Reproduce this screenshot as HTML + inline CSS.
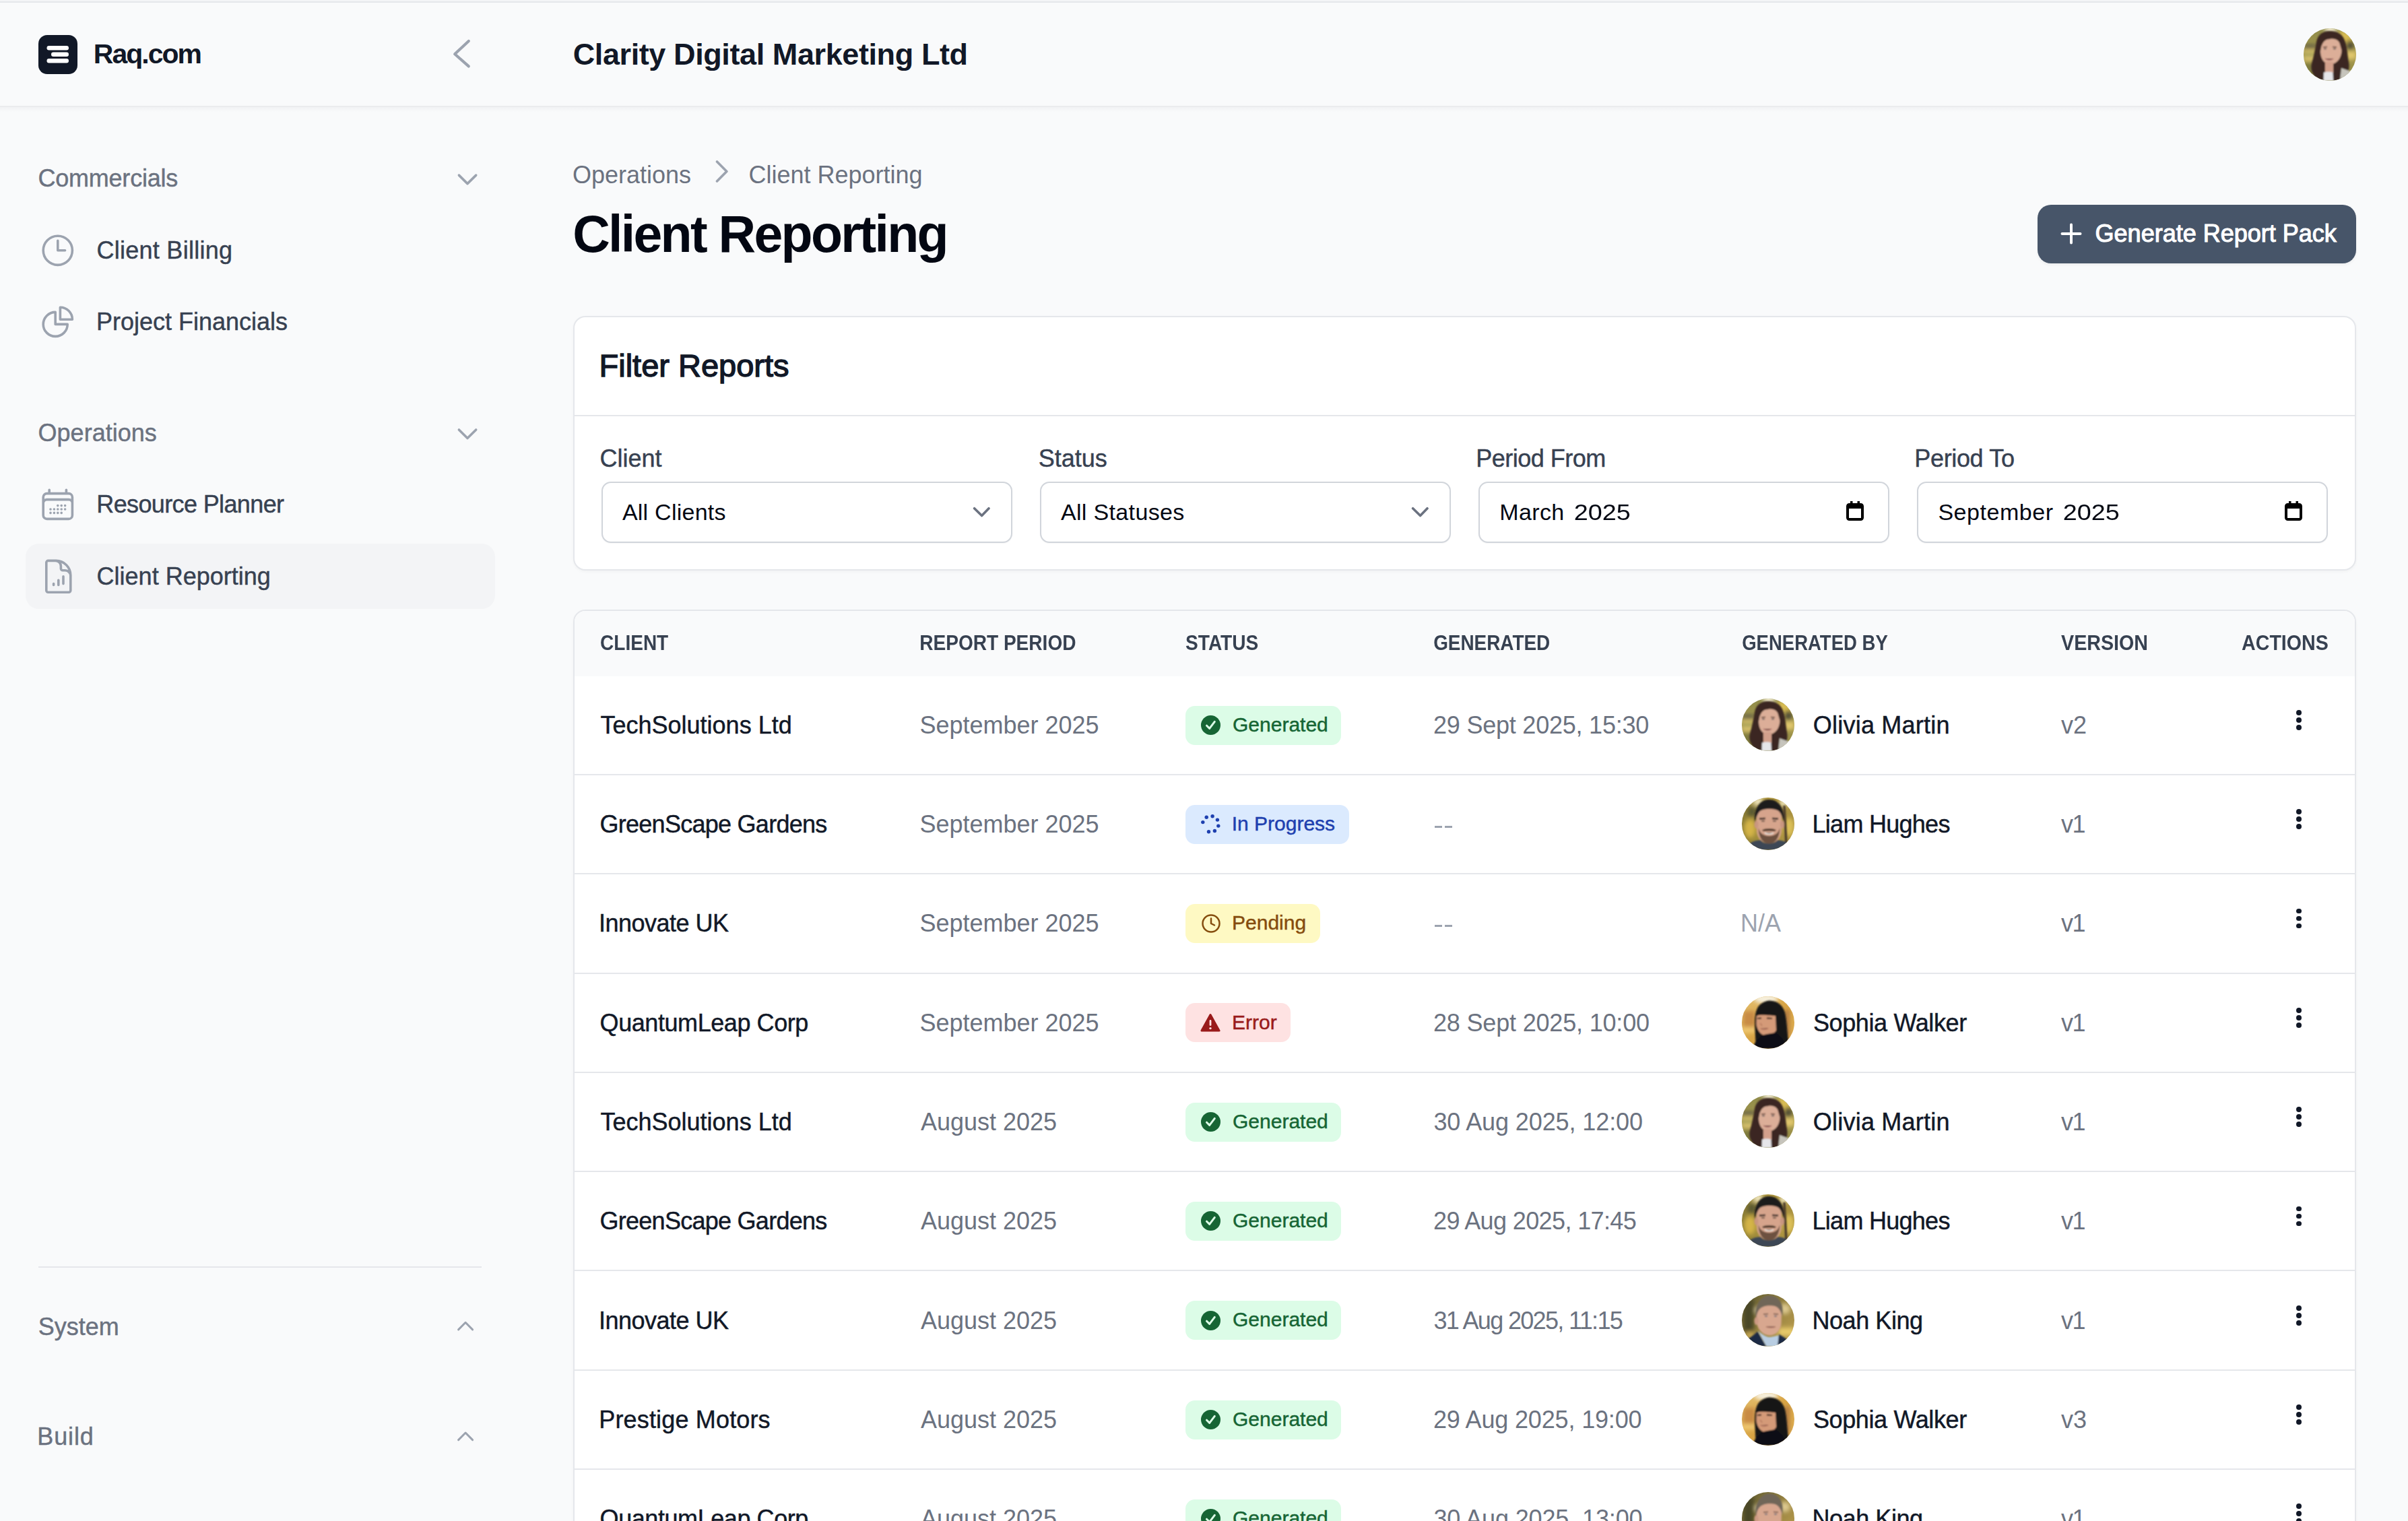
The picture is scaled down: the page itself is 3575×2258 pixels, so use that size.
<!DOCTYPE html>
<html><head><meta charset="utf-8"><title>Client Reporting</title>
<style>
html,body{margin:0;padding:0}
body{width:3575px;height:2258px;position:relative;overflow:hidden;background:#f9fafb;font-family:"Liberation Sans",sans-serif}
.a{position:absolute;display:block}
.t{position:absolute;white-space:nowrap;line-height:1}
</style></head><body>
<div class="a" style="left:0px;top:0px;width:3575px;height:2px;background:#f3f4f6;"></div>
<div class="a" style="left:0px;top:2px;width:3575px;height:2px;background:#e5e7eb;"></div>
<div class="a" style="left:0px;top:157px;width:3575px;height:2px;background:#ebecee;"></div>
<div class="a" style="left:0px;top:159px;width:3575px;height:7px;background:linear-gradient(#f1f2f4,#f9fafb);"></div>
<svg class="a" style="left:57px;top:52px;" width="58" height="58" viewBox="0 0 58 58" fill="none"><rect x="0" y="0" width="58" height="58" rx="13" fill="#111827"/><rect x="12.5" y="16" width="32.5" height="6.5" rx="3.25" fill="#fff"/><rect x="19" y="25.5" width="26" height="6.5" rx="3.25" fill="#fff"/><rect x="12.5" y="35" width="32.5" height="6.5" rx="3.25" fill="#fff"/></svg>
<div class="t" style="left:138.8px;top:59.6px;font-size:41px;font-weight:700;color:#111827;letter-spacing:-2px;">Raq.com</div>
<svg class="a" style="left:0;top:0" width="3575" height="2258" viewBox="0 0 3575 2258" fill="none"><polyline points="695.8,61.0 675.2,80.2 695.8,98.4" stroke="#9ca3af" stroke-width="4.2" stroke-linecap="round" stroke-linejoin="round" fill="none"/></svg>
<div class="t" style="left:850.7px;top:57.9px;font-size:45px;font-weight:700;color:#111827;letter-spacing:-0.4px;">Clarity Digital Marketing Ltd</div>
<svg class="a" style="left:3420.0px;top:41.5px" width="78" height="78" viewBox="0 0 78 78"><defs><clipPath id="chdr"><circle cx="39" cy="39" r="39"/></clipPath><filter id="fhdr" x="-20%" y="-20%" width="140%" height="140%"><feGaussianBlur stdDeviation="0.8"/></filter><filter id="bhdr" x="-50%" y="-50%" width="200%" height="200%"><feGaussianBlur stdDeviation="3"/></filter><linearGradient id="ghdr" x1="0" y1="0" x2="0" y2="1"><stop offset="0" stop-color="#8e8a4a"/><stop offset="0.5" stop-color="#a89a4c"/><stop offset="1" stop-color="#8a8444"/></linearGradient></defs>
<g clip-path="url(#chdr)"><rect width="78" height="78" fill="url(#ghdr)"/>
<g filter="url(#bhdr)"><ellipse cx="40" cy="2" rx="9" ry="6" fill="#f2ecd0"/><rect x="52" y="4" width="22" height="18" fill="#d8bc52"/><rect x="64" y="18" width="10" height="14" fill="#4e4c36"/>
<rect x="0" y="24" width="20" height="6" fill="#5e5a44"/><rect x="0" y="32" width="20" height="5" fill="#e0c66e"/><rect x="0" y="37" width="20" height="4" fill="#7c8a46"/><rect x="0" y="42" width="20" height="6" fill="#e6cc74"/>
<rect x="62" y="34" width="16" height="12" fill="#e2c86e"/><rect x="0" y="52" width="16" height="20" fill="#7e7a3c"/></g>
<g filter="url(#fhdr)">
<path d="M39 4 C28 4 21 10 19 20 C17 32 15 42 12 52 C10 60 12 70 24 78 L56 78 C66 70 69 60 67 50 C65 40 65 28 61 18 C58 9 50 4 39 4Z" fill="#3b2820"/>
<path d="M27 24 C28 17 33 15.5 40 15.5 C48 15.5 53 18 54 24 L56.5 33 C56 44 50 53 39 54 C30 53 25 44 25 34Z" fill="#dcae98"/>
<path d="M27 24 C26 19 31 12 40 12 L40 16 C33 16 29 19 27 26Z" fill="#3b2820"/>
<path d="M29 28 L35 27.5 M43 27.5 L49 28" stroke="#5a3a2e" stroke-width="1.4"/>
<path d="M30 30.5 L34 30.5 M44 30.5 L48 30.5" stroke="#4a4a50" stroke-width="1.5"/>
<path d="M32 45 C36 47.5 41 47.5 44 45" stroke="#b0706a" stroke-width="2"/>
<rect x="32" y="50" width="12" height="16" fill="#d3a08c"/>
<path d="M29.5 78 L30 65.5 C34 64 40 64 43.5 65.5 L44 78Z" fill="#e6e6ea"/>
<path d="M56 59 L70 64 L70 78 L54 78Z" fill="#c6c4bc"/>
</g></g></svg>
<div class="t" style="left:56.5px;top:246.9px;font-size:36px;font-weight:400;color:#6b7280;letter-spacing:-0.23px;-webkit-text-stroke:0.45px currentColor;">Commercials</div>
<svg class="a" style="left:0;top:0" width="3575" height="2258" viewBox="0 0 3575 2258" fill="none"><polyline points="681.4,260.1 694.0,272.6 706.7,260.1" stroke="#9ca3af" stroke-width="3.6" stroke-linecap="round" stroke-linejoin="round" fill="none"/></svg>
<svg class="a" style="left:57.2px;top:343.2px" width="57.6" height="57.6" viewBox="0 0 24 24" fill="none" stroke="#9ca3af" stroke-width="1.5" stroke-linecap="round" stroke-linejoin="round"><path d="M12 6v6h4.5m4.5 0a9 9 0 1 1-18 0 9 9 0 0 1 18 0Z"/></svg>
<div class="t" style="left:143.5px;top:354.0px;font-size:36px;font-weight:400;color:#374151;letter-spacing:0.26px;-webkit-text-stroke:0.45px currentColor;">Client Billing</div>
<svg class="a" style="left:57.2px;top:448.8px" width="57.6" height="57.6" viewBox="0 0 24 24" fill="none" stroke="#9ca3af" stroke-width="1.5" stroke-linecap="round" stroke-linejoin="round"><path d="M10.5 6a7.5 7.5 0 1 0 7.5 7.5h-7.5V6Z"/><path d="M13.5 10.5H21A7.5 7.5 0 0 0 13.5 3v7.5Z"/></svg>
<div class="t" style="left:143.0px;top:459.9px;font-size:36px;font-weight:400;color:#374151;-webkit-text-stroke:0.45px currentColor;">Project Financials</div>
<div class="t" style="left:56.6px;top:624.5px;font-size:36px;font-weight:400;color:#6b7280;-webkit-text-stroke:0.45px currentColor;">Operations</div>
<svg class="a" style="left:0;top:0" width="3575" height="2258" viewBox="0 0 3575 2258" fill="none"><polyline points="681.4,638.0 694.0,650.5 706.7,638.0" stroke="#9ca3af" stroke-width="3.6" stroke-linecap="round" stroke-linejoin="round" fill="none"/></svg>
<svg class="a" style="left:57.2px;top:720.4px" width="57.6" height="57.6" viewBox="0 0 24 24" fill="none" stroke="#9ca3af" stroke-width="1.5" stroke-linecap="round" stroke-linejoin="round"><path d="M6.75 3v2.25M17.25 3v2.25M3 18.75V7.5a2.25 2.25 0 0 1 2.25-2.25h13.5A2.25 2.25 0 0 1 21 7.5v11.25m-18 0A2.25 2.25 0 0 0 5.25 21h13.5A2.25 2.25 0 0 0 21 18.75m-18 0v-7.5A2.25 2.25 0 0 1 5.25 9h13.5A2.25 2.25 0 0 1 21 11.25v7.5m-9-6h.008v.008H12v-.008ZM12 15h.008v.008H12V15Zm0 2.25h.008v.008H12v-.008ZM9.75 15h.008v.008H9.75V15Zm0 2.25h.008v.008H9.75v-.008ZM7.5 15h.008v.008H7.5V15Zm0 2.25h.008v.008H7.5v-.008Zm6.75-4.5h.008v.008h-.008v-.008Zm0 2.25h.008v.008h-.008V15Zm0 2.25h.008v.008h-.008v-.008Zm2.25-4.5h.008v.008H16.5v-.008Zm0 2.25h.008v.008H16.5V15Z"/></svg>
<div class="t" style="left:143.3px;top:730.7px;font-size:36px;font-weight:400;color:#374151;letter-spacing:-0.63px;-webkit-text-stroke:0.45px currentColor;">Resource Planner</div>
<div class="a" style="left:38px;top:807px;width:697px;height:97px;background:#f3f4f6;border-radius:20px"></div>
<svg class="a" style="left:57.5px;top:827.2px" width="57.6" height="57.6" viewBox="0 0 24 24" fill="none" stroke="#9ca3af" stroke-width="1.5" stroke-linecap="round" stroke-linejoin="round"><path d="M19.5 14.25v-2.625a3.375 3.375 0 0 0-3.375-3.375h-1.5A1.125 1.125 0 0 1 13.5 7.125v-1.5a3.375 3.375 0 0 0-3.375-3.375H8.25M9 16.5v.75m3-3v3M15 12v4.5m-4.5-14.25H5.625c-.621 0-1.125.504-1.125 1.125v17.25c0 .621.504 1.125 1.125 1.125h12.75c.621 0 1.125-.504 1.125-1.125V11.25a9 9 0 0 0-9-9Z"/></svg>
<div class="t" style="left:143.6px;top:837.7px;font-size:36px;font-weight:400;color:#374151;-webkit-text-stroke:0.45px currentColor;">Client Reporting</div>
<div class="a" style="left:57px;top:1880px;width:658px;height:2px;background:#e5e7eb;"></div>
<div class="t" style="left:56.7px;top:1951.5px;font-size:36px;font-weight:400;color:#6b7280;-webkit-text-stroke:0.45px currentColor;">System</div>
<svg class="a" style="left:0;top:0" width="3575" height="2258" viewBox="0 0 3575 2258" fill="none"><polyline points="680.6,1973.9 691.1,1963.3 701.6,1973.9" stroke="#9ca3af" stroke-width="3.0" stroke-linecap="round" stroke-linejoin="round" fill="none"/></svg>
<div class="t" style="left:55.3px;top:2115.2px;font-size:36px;font-weight:400;color:#6b7280;letter-spacing:0.85px;-webkit-text-stroke:0.45px currentColor;">Build</div>
<svg class="a" style="left:0;top:0" width="3575" height="2258" viewBox="0 0 3575 2258" fill="none"><polyline points="680.6,2137.6 691.1,2127.0 701.6,2137.6" stroke="#9ca3af" stroke-width="3.0" stroke-linecap="round" stroke-linejoin="round" fill="none"/></svg>
<div class="t" style="left:849.9px;top:241.5px;font-size:36px;font-weight:400;color:#6b7280;">Operations</div>
<svg class="a" style="left:0;top:0" width="3575" height="2258" viewBox="0 0 3575 2258" fill="none"><polyline points="1064.5,240.0 1078.9,254.4 1064.5,269.0" stroke="#9ca3af" stroke-width="3.6" stroke-linecap="round" stroke-linejoin="round" fill="none"/></svg>
<div class="t" style="left:1111.4px;top:241.5px;font-size:36px;font-weight:400;color:#6b7280;">Client Reporting</div>
<div class="t" style="left:850.2px;top:308.5px;font-size:77px;font-weight:700;color:#030712;letter-spacing:-2.7px;">Client Reporting</div>
<div class="a" style="left:3025px;top:304px;width:473px;height:86.5px;background:#475569;border-radius:20px;box-shadow:0 2px 4px rgba(0,0,0,0.06)"></div>
<svg class="a" style="left:3055px;top:327px" width="40" height="40" viewBox="0 0 40 40"><path d="M20 6.5v27M6.5 20h27" stroke="#fff" stroke-width="4" stroke-linecap="round"/></svg>
<div class="t" style="left:3110.6px;top:328.9px;font-size:36px;font-weight:400;color:#ffffff;-webkit-text-stroke:1.1px #ffffff;">Generate Report Pack</div>
<div class="a" style="left:851px;top:469px;width:2643px;height:374px;background:#fff;border:2px solid #e5e7eb;border-radius:18px;box-shadow:0 2px 4px rgba(0,0,0,0.03)"></div>
<div class="a" style="left:853px;top:616px;width:2643px;height:2px;background:#e5e7eb;"></div>
<div class="t" style="left:889.5px;top:519.3px;font-size:47px;font-weight:400;color:#111827;-webkit-text-stroke:1.4px #111827;">Filter Reports</div>
<div class="t" style="left:890.5px;top:663.2px;font-size:36px;font-weight:400;color:#374151;-webkit-text-stroke:0.45px currentColor;">Client</div>
<div class="a" style="left:893px;top:715px;width:606px;height:87px;background:#fff;border:2px solid #d1d5db;border-radius:14px;box-shadow:0 1px 2px rgba(0,0,0,0.04)"></div>
<div class="t" style="left:923.9px;top:742.6px;font-size:34px;font-weight:400;color:#030712;letter-spacing:0.25px;">All Clients</div>
<svg class="a" style="left:0;top:0" width="3575" height="2258" viewBox="0 0 3575 2258" fill="none"><polyline points="1446.6,754.7 1457.6,765.5 1468.0,754.7" stroke="#6b7280" stroke-width="3.6" stroke-linecap="round" stroke-linejoin="round" fill="none"/></svg>
<div class="t" style="left:1541.7px;top:663.2px;font-size:36px;font-weight:400;color:#374151;-webkit-text-stroke:0.45px currentColor;">Status</div>
<div class="a" style="left:1544px;top:715px;width:606px;height:87px;background:#fff;border:2px solid #d1d5db;border-radius:14px;box-shadow:0 1px 2px rgba(0,0,0,0.04)"></div>
<div class="t" style="left:1574.9px;top:742.6px;font-size:34px;font-weight:400;color:#030712;letter-spacing:0.35px;">All Statuses</div>
<svg class="a" style="left:0;top:0" width="3575" height="2258" viewBox="0 0 3575 2258" fill="none"><polyline points="2097.6,754.7 2108.6,765.5 2119.0,754.7" stroke="#6b7280" stroke-width="3.6" stroke-linecap="round" stroke-linejoin="round" fill="none"/></svg>
<div class="t" style="left:2191.3px;top:663.2px;font-size:36px;font-weight:400;color:#374151;letter-spacing:-0.5px;-webkit-text-stroke:0.45px currentColor;">Period From</div>
<div class="a" style="left:2195px;top:715px;width:606px;height:87px;background:#fff;border:2px solid #d1d5db;border-radius:14px;box-shadow:0 1px 2px rgba(0,0,0,0.04)"></div>
<div class="t" style="left:2226.2px;top:742.6px;font-size:34px;font-weight:400;color:#030712;letter-spacing:0.4px;">March</div>
<div class="t" style="left:2336.7px;top:742.6px;font-size:34px;font-weight:400;color:#030712;transform:scaleX(1.11);transform-origin:1.71px 0;">2025</div>
<svg class="a" style="left:2740.5px;top:744px" width="26" height="29" viewBox="0 0 26 29"><rect x="2" y="5" width="22" height="22" rx="2.5" stroke="#000" stroke-width="4" fill="none"/><rect x="1" y="4" width="24" height="7" rx="2" fill="#000"/><rect x="6" y="0" width="3.5" height="5" fill="#000"/><rect x="16.5" y="0" width="3.5" height="5" fill="#000"/></svg>
<div class="t" style="left:2842.3px;top:663.2px;font-size:36px;font-weight:400;color:#374151;letter-spacing:-0.35px;-webkit-text-stroke:0.45px currentColor;">Period To</div>
<div class="a" style="left:2846px;top:715px;width:606px;height:87px;background:#fff;border:2px solid #d1d5db;border-radius:14px;box-shadow:0 1px 2px rgba(0,0,0,0.04)"></div>
<div class="t" style="left:2877.4px;top:742.6px;font-size:34px;font-weight:400;color:#030712;letter-spacing:0.55px;">September</div>
<div class="t" style="left:3062.9px;top:742.6px;font-size:34px;font-weight:400;color:#030712;transform:scaleX(1.11);transform-origin:1.71px 0;">2025</div>
<svg class="a" style="left:3391.5px;top:744px" width="26" height="29" viewBox="0 0 26 29"><rect x="2" y="5" width="22" height="22" rx="2.5" stroke="#000" stroke-width="4" fill="none"/><rect x="1" y="4" width="24" height="7" rx="2" fill="#000"/><rect x="6" y="0" width="3.5" height="5" fill="#000"/><rect x="16.5" y="0" width="3.5" height="5" fill="#000"/></svg>
<div class="a" style="left:851px;top:905px;width:2643px;height:1400px;background:#fff;border:2px solid #e5e7eb;border-radius:18px;box-shadow:0 2px 4px rgba(0,0,0,0.03);overflow:hidden"><div style="height:97px;background:#f9fafb"></div></div>
<div class="t" style="left:891.0px;top:939.3px;font-size:31px;font-weight:700;color:#374151;transform:scaleX(0.903);transform-origin:1.27px 0;">CLIENT</div>
<div class="t" style="left:1364.9px;top:939.3px;font-size:31px;font-weight:700;color:#374151;transform:scaleX(0.905);transform-origin:2.07px 0;">REPORT PERIOD</div>
<div class="t" style="left:1760.1px;top:939.3px;font-size:31px;font-weight:700;color:#374151;transform:scaleX(0.906);transform-origin:0.89px 0;">STATUS</div>
<div class="t" style="left:2127.7px;top:939.3px;font-size:31px;font-weight:700;color:#374151;transform:scaleX(0.9);transform-origin:1.27px 0;">GENERATED</div>
<div class="t" style="left:2585.7px;top:939.3px;font-size:31px;font-weight:700;color:#374151;transform:scaleX(0.888);transform-origin:1.27px 0;">GENERATED BY</div>
<div class="t" style="left:3059.8px;top:939.3px;font-size:31px;font-weight:700;color:#374151;transform:scaleX(0.925);transform-origin:0.21px 0;">VERSION</div>
<div class="t" style="left:3328.2px;top:939.3px;font-size:31px;font-weight:700;color:#374151;transform:scaleX(0.923);transform-origin:0.77px 0;">ACTIONS</div>
<div class="a" style="left:853px;top:1149px;width:2643px;height:2px;background:#e5e7eb;"></div>
<div class="t" style="left:891.5px;top:1058.7px;font-size:36px;font-weight:400;color:#111827;-webkit-text-stroke:0.45px currentColor;">TechSolutions Ltd</div>
<div class="t" style="left:1365.4px;top:1058.7px;font-size:36px;font-weight:400;color:#6b7280;">September 2025</div>
<div class="a" style="left:1760px;top:1047.5px;width:231px;height:58px;background:#dcfce7;border-radius:14px"></div>
<svg class="a" style="left:1783px;top:1062.0px" width="29" height="29" viewBox="0 0 29 29"><circle cx="14.5" cy="14.5" r="14.5" fill="#166534"/><path d="M8.5 15.2l4.2 4.2 7.6-10" stroke="#dcfce7" stroke-width="3" stroke-linecap="round" stroke-linejoin="round" fill="none"/></svg>
<div class="t" style="left:1830.0px;top:1060.7px;font-size:30px;font-weight:400;color:#166534;-webkit-text-stroke:0.45px currentColor;">Generated</div>
<div class="t" style="left:2128.0px;top:1058.7px;font-size:36px;font-weight:400;color:#6b7280;letter-spacing:-0.22px;">29 Sept 2025, 15:30</div>
<svg class="a" style="left:2586.0px;top:1037.0px" width="78" height="78" viewBox="0 0 78 78"><defs><clipPath id="cr0"><circle cx="39" cy="39" r="39"/></clipPath><filter id="fr0" x="-20%" y="-20%" width="140%" height="140%"><feGaussianBlur stdDeviation="0.8"/></filter><filter id="br0" x="-50%" y="-50%" width="200%" height="200%"><feGaussianBlur stdDeviation="3"/></filter><linearGradient id="gr0" x1="0" y1="0" x2="0" y2="1"><stop offset="0" stop-color="#8e8a4a"/><stop offset="0.5" stop-color="#a89a4c"/><stop offset="1" stop-color="#8a8444"/></linearGradient></defs>
<g clip-path="url(#cr0)"><rect width="78" height="78" fill="url(#gr0)"/>
<g filter="url(#br0)"><ellipse cx="40" cy="2" rx="9" ry="6" fill="#f2ecd0"/><rect x="52" y="4" width="22" height="18" fill="#d8bc52"/><rect x="64" y="18" width="10" height="14" fill="#4e4c36"/>
<rect x="0" y="24" width="20" height="6" fill="#5e5a44"/><rect x="0" y="32" width="20" height="5" fill="#e0c66e"/><rect x="0" y="37" width="20" height="4" fill="#7c8a46"/><rect x="0" y="42" width="20" height="6" fill="#e6cc74"/>
<rect x="62" y="34" width="16" height="12" fill="#e2c86e"/><rect x="0" y="52" width="16" height="20" fill="#7e7a3c"/></g>
<g filter="url(#fr0)">
<path d="M39 4 C28 4 21 10 19 20 C17 32 15 42 12 52 C10 60 12 70 24 78 L56 78 C66 70 69 60 67 50 C65 40 65 28 61 18 C58 9 50 4 39 4Z" fill="#3b2820"/>
<path d="M27 24 C28 17 33 15.5 40 15.5 C48 15.5 53 18 54 24 L56.5 33 C56 44 50 53 39 54 C30 53 25 44 25 34Z" fill="#dcae98"/>
<path d="M27 24 C26 19 31 12 40 12 L40 16 C33 16 29 19 27 26Z" fill="#3b2820"/>
<path d="M29 28 L35 27.5 M43 27.5 L49 28" stroke="#5a3a2e" stroke-width="1.4"/>
<path d="M30 30.5 L34 30.5 M44 30.5 L48 30.5" stroke="#4a4a50" stroke-width="1.5"/>
<path d="M32 45 C36 47.5 41 47.5 44 45" stroke="#b0706a" stroke-width="2"/>
<rect x="32" y="50" width="12" height="16" fill="#d3a08c"/>
<path d="M29.5 78 L30 65.5 C34 64 40 64 43.5 65.5 L44 78Z" fill="#e6e6ea"/>
<path d="M56 59 L70 64 L70 78 L54 78Z" fill="#c6c4bc"/>
</g></g></svg>
<div class="t" style="left:2691.8px;top:1058.7px;font-size:36px;font-weight:400;color:#111827;letter-spacing:0.22px;-webkit-text-stroke:0.45px currentColor;">Olivia Martin</div>
<div class="t" style="left:3059.9px;top:1058.7px;font-size:36px;font-weight:400;color:#6b7280;">v2</div>
<div class="a" style="left:3409.3px;top:1054.1px;width:7.8px;height:7.8px;border-radius:50%;background:#111827"></div>
<div class="a" style="left:3409.3px;top:1065.1px;width:7.8px;height:7.8px;border-radius:50%;background:#111827"></div>
<div class="a" style="left:3409.3px;top:1076.1px;width:7.8px;height:7.8px;border-radius:50%;background:#111827"></div>
<div class="a" style="left:853px;top:1296px;width:2643px;height:2px;background:#e5e7eb;"></div>
<div class="t" style="left:890.5px;top:1206.0px;font-size:36px;font-weight:400;color:#111827;letter-spacing:-0.73px;-webkit-text-stroke:0.45px currentColor;">GreenScape Gardens</div>
<div class="t" style="left:1365.4px;top:1206.0px;font-size:36px;font-weight:400;color:#6b7280;">September 2025</div>
<div class="a" style="left:1760px;top:1194.8px;width:243px;height:58px;background:#dbeafe;border-radius:14px"></div>
<svg class="a" style="left:1783px;top:1209.3px" width="29" height="29" viewBox="0 0 29 29"><circle cx="8.2" cy="4.2" r="2.7" fill="#1e40af"/><circle cx="17.1" cy="2.8" r="2.7" fill="#1e40af"/><circle cx="24.4" cy="8.1" r="2.7" fill="#1e40af"/><circle cx="25.8" cy="17.1" r="2.7" fill="#1e40af"/><circle cx="20.4" cy="24.5" r="2.7" fill="#1e40af"/><circle cx="11.5" cy="25.8" r="2.7" fill="#1e40af"/><circle cx="2.8" cy="11.6" r="2.7" fill="#1e40af"/></svg>
<div class="t" style="left:1828.7px;top:1208.0px;font-size:30px;font-weight:400;color:#1e40af;-webkit-text-stroke:0.45px currentColor;">In Progress</div>
<div class="a" style="left:2130px;top:1226px;width:11px;height:2.5px;background:#9ca3af;"></div>
<div class="a" style="left:2145px;top:1226px;width:11px;height:2.5px;background:#9ca3af;"></div>
<svg class="a" style="left:2586.0px;top:1184.3px" width="78" height="78" viewBox="0 0 78 78"><defs><clipPath id="cr1"><circle cx="39" cy="39" r="39"/></clipPath><filter id="fr1" x="-20%" y="-20%" width="140%" height="140%"><feGaussianBlur stdDeviation="0.8"/></filter><filter id="br1" x="-50%" y="-50%" width="200%" height="200%"><feGaussianBlur stdDeviation="3"/></filter><linearGradient id="gr1" x1="0" y1="0" x2="1" y2="0"><stop offset="0" stop-color="#8a7c34"/><stop offset="0.5" stop-color="#b09840"/><stop offset="1" stop-color="#a89040"/></linearGradient></defs>
<g clip-path="url(#cr1)"><rect width="78" height="78" fill="url(#gr1)"/>
<g filter="url(#br1)"><ellipse cx="24" cy="6" rx="8" ry="6" fill="#efe6c0"/><ellipse cx="62" cy="8" rx="6" ry="6" fill="#efe6c0"/><rect x="8" y="14" width="14" height="14" fill="#5c5a30"/>
<ellipse cx="12" cy="46" rx="9" ry="14" fill="#d4b446"/><ellipse cx="70" cy="44" rx="8" ry="14" fill="#dcc058"/></g>
<g filter="url(#fr1)">
<path d="M63 12 L66 70" stroke="#4a3a2a" stroke-width="3.5"/>
<path d="M22 30 C22 20 30 14.5 40.5 14.5 C51 14.5 59 20 59 30 L59 48 C59 60 51 68 40.5 68 C30 68 22 60 22 48Z" fill="#d6a48c"/>
<ellipse cx="21.5" cy="40" rx="3" ry="6" fill="#c99680"/><ellipse cx="60" cy="40" rx="3" ry="6" fill="#c99680"/>
<path d="M19.5 37 C17 18 26 3 40 3 C55 3 64 16 62 36 C60 28 58 22 53 19 C45 16 34 16 27 20 C23 24 21 30 19.5 37Z" fill="#1c1a1c"/>
<path d="M26 31.5 L35 31 M45 31 L54 31.5" stroke="#231c1c" stroke-width="2.4"/>
<path d="M29 35 L34 35 M46 35 L51 35" stroke="#4a3a34" stroke-width="1.5"/>
<path d="M24.5 45 C25 62 33 68.5 40.5 68.5 C48 68.5 56 62 56.5 45 C54 53 50 56.5 40.5 57 C31 56.5 27 53 24.5 45Z" fill="#5f4636" opacity="0.88"/><path d="M31 49 C35 46.5 46 46.5 50 49 C46 48.5 35 48.5 31 49Z" stroke="#4a3428" stroke-width="2.2"/>
<path d="M34 52.5 C37 54.5 44 54.5 47 52.5" stroke="#f0ece6" stroke-width="1.6"/>
<path d="M4 78 C8 68 16 64 28 63 C32 70 48 70 53 63 C64 64 72 68 76 78Z" fill="#3e4654"/>
</g></g></svg>
<div class="t" style="left:2690.5px;top:1206.0px;font-size:36px;font-weight:400;color:#111827;letter-spacing:-0.72px;-webkit-text-stroke:0.45px currentColor;">Liam Hughes</div>
<div class="t" style="left:3059.9px;top:1206.0px;font-size:36px;font-weight:400;color:#6b7280;letter-spacing:-1.5px;">v1</div>
<div class="a" style="left:3409.3px;top:1201.4px;width:7.8px;height:7.8px;border-radius:50%;background:#111827"></div>
<div class="a" style="left:3409.3px;top:1212.4px;width:7.8px;height:7.8px;border-radius:50%;background:#111827"></div>
<div class="a" style="left:3409.3px;top:1223.4px;width:7.8px;height:7.8px;border-radius:50%;background:#111827"></div>
<div class="a" style="left:853px;top:1444px;width:2643px;height:2px;background:#e5e7eb;"></div>
<div class="t" style="left:889.0px;top:1353.3px;font-size:36px;font-weight:400;color:#111827;letter-spacing:-0.5px;-webkit-text-stroke:0.45px currentColor;">Innovate UK</div>
<div class="t" style="left:1365.4px;top:1353.3px;font-size:36px;font-weight:400;color:#6b7280;">September 2025</div>
<div class="a" style="left:1760px;top:1342.1px;width:200px;height:58px;background:#fef9c3;border-radius:14px"></div>
<svg class="a" style="left:1782.5px;top:1356.1px" width="30" height="30" viewBox="0 0 24 24" fill="none" stroke="#854d0e" stroke-width="2" stroke-linecap="round" stroke-linejoin="round"><circle cx="12" cy="12" r="10"/><polyline points="12 6 12 12 16 14"/></svg>
<div class="t" style="left:1829.0px;top:1355.3px;font-size:30px;font-weight:400;color:#854d0e;-webkit-text-stroke:0.45px currentColor;">Pending</div>
<div class="a" style="left:2130px;top:1373px;width:11px;height:2.5px;background:#9ca3af;"></div>
<div class="a" style="left:2145px;top:1373px;width:11px;height:2.5px;background:#9ca3af;"></div>
<div class="t" style="left:2584.0px;top:1353.3px;font-size:36px;font-weight:400;color:#9ca3af;">N/A</div>
<div class="t" style="left:3059.9px;top:1353.3px;font-size:36px;font-weight:400;color:#6b7280;letter-spacing:-1.5px;">v1</div>
<div class="a" style="left:3409.3px;top:1348.7px;width:7.8px;height:7.8px;border-radius:50%;background:#111827"></div>
<div class="a" style="left:3409.3px;top:1359.7px;width:7.8px;height:7.8px;border-radius:50%;background:#111827"></div>
<div class="a" style="left:3409.3px;top:1370.7px;width:7.8px;height:7.8px;border-radius:50%;background:#111827"></div>
<div class="a" style="left:853px;top:1591px;width:2643px;height:2px;background:#e5e7eb;"></div>
<div class="t" style="left:890.6px;top:1500.6px;font-size:36px;font-weight:400;color:#111827;letter-spacing:-0.43px;-webkit-text-stroke:0.45px currentColor;">QuantumLeap Corp</div>
<div class="t" style="left:1365.4px;top:1500.6px;font-size:36px;font-weight:400;color:#6b7280;">September 2025</div>
<div class="a" style="left:1760px;top:1489.4px;width:156px;height:58px;background:#fee2e2;border-radius:14px"></div>
<svg class="a" style="left:1782.3px;top:1503.6px" width="30" height="29" viewBox="0 0 30 29"><polygon points="15,2.5 28,26 2,26" fill="#991b1b" stroke="#991b1b" stroke-width="3" stroke-linejoin="round"/><rect x="13.6" y="10" width="2.8" height="9" rx="1.4" fill="#fee2e2"/><circle cx="15" cy="22.6" r="1.7" fill="#fee2e2"/></svg>
<div class="t" style="left:1829.0px;top:1502.6px;font-size:30px;font-weight:400;color:#991b1b;-webkit-text-stroke:0.45px currentColor;">Error</div>
<div class="t" style="left:2128.0px;top:1500.6px;font-size:36px;font-weight:400;color:#6b7280;letter-spacing:-0.18px;">28 Sept 2025, 10:00</div>
<svg class="a" style="left:2586.0px;top:1478.9px" width="78" height="78" viewBox="0 0 78 78"><defs><clipPath id="cr3"><circle cx="39" cy="39" r="39"/></clipPath><filter id="fr3" x="-20%" y="-20%" width="140%" height="140%"><feGaussianBlur stdDeviation="0.8"/></filter><filter id="br3" x="-50%" y="-50%" width="200%" height="200%"><feGaussianBlur stdDeviation="3"/></filter><linearGradient id="gr3" x1="0" y1="0" x2="1" y2="1"><stop offset="0" stop-color="#e4c070"/><stop offset="0.5" stop-color="#d8a444"/><stop offset="1" stop-color="#deae52"/></linearGradient></defs>
<g clip-path="url(#cr3)"><rect width="78" height="78" fill="url(#gr3)"/>
<g filter="url(#br3)"><ellipse cx="36" cy="4" rx="18" ry="7" fill="#f6f0de"/><rect x="2" y="22" width="18" height="24" fill="#c88a44"/><rect x="0" y="46" width="22" height="8" fill="#f2ca72"/>
<rect x="64" y="20" width="6" height="40" fill="#a87040"/></g>
<g filter="url(#fr3)">
<path d="M21 78 L19.5 50 C19 36 19 24 24 16 C29 9 36 6.5 42 6.5 C52 7 60 12 64 24 C67 36 67 52 69 64 C68 72 64 76 60 78Z" fill="#141416"/>
<path d="M22 30 C22 28 28 27.5 36 28 C44 28.5 50 28.5 52 30 L53.5 42 C53 52 46 58.5 36 58.5 C28 58 22 50 21.5 40Z" fill="#d49a78"/>
<path d="M50 28 L56 30 L57 56 L51 50Z" fill="#141416"/>
<path d="M23 33 L29 32.5 M37 32.5 L45 33" stroke="#2a1a14" stroke-width="1.8"/>
<path d="M27 40 C29 42 30 42 30 44" stroke="#b87a5e" stroke-width="1.2"/>
<path d="M28 48 C31 49 36 49 39 47.5" stroke="#a86a58" stroke-width="1.8"/>
<path d="M16 78 C20 64 28 57 38 56 L50 54 C58 58 64 66 66 78Z" fill="#111114"/>
</g></g></svg>
<div class="t" style="left:2691.9px;top:1500.6px;font-size:36px;font-weight:400;color:#111827;letter-spacing:-0.37px;-webkit-text-stroke:0.45px currentColor;">Sophia Walker</div>
<div class="t" style="left:3059.9px;top:1500.6px;font-size:36px;font-weight:400;color:#6b7280;letter-spacing:-1.5px;">v1</div>
<div class="a" style="left:3409.3px;top:1496.0px;width:7.8px;height:7.8px;border-radius:50%;background:#111827"></div>
<div class="a" style="left:3409.3px;top:1507.0px;width:7.8px;height:7.8px;border-radius:50%;background:#111827"></div>
<div class="a" style="left:3409.3px;top:1518.0px;width:7.8px;height:7.8px;border-radius:50%;background:#111827"></div>
<div class="a" style="left:853px;top:1738px;width:2643px;height:2px;background:#e5e7eb;"></div>
<div class="t" style="left:891.5px;top:1647.9px;font-size:36px;font-weight:400;color:#111827;-webkit-text-stroke:0.45px currentColor;">TechSolutions Ltd</div>
<div class="t" style="left:1366.9px;top:1647.9px;font-size:36px;font-weight:400;color:#6b7280;">August 2025</div>
<div class="a" style="left:1760px;top:1636.7px;width:231px;height:58px;background:#dcfce7;border-radius:14px"></div>
<svg class="a" style="left:1783px;top:1651.2px" width="29" height="29" viewBox="0 0 29 29"><circle cx="14.5" cy="14.5" r="14.5" fill="#166534"/><path d="M8.5 15.2l4.2 4.2 7.6-10" stroke="#dcfce7" stroke-width="3" stroke-linecap="round" stroke-linejoin="round" fill="none"/></svg>
<div class="t" style="left:1830.0px;top:1649.9px;font-size:30px;font-weight:400;color:#166534;-webkit-text-stroke:0.45px currentColor;">Generated</div>
<div class="t" style="left:2128.4px;top:1647.9px;font-size:36px;font-weight:400;color:#6b7280;letter-spacing:-0.1px;">30 Aug 2025, 12:00</div>
<svg class="a" style="left:2586.0px;top:1626.2px" width="78" height="78" viewBox="0 0 78 78"><defs><clipPath id="cr4"><circle cx="39" cy="39" r="39"/></clipPath><filter id="fr4" x="-20%" y="-20%" width="140%" height="140%"><feGaussianBlur stdDeviation="0.8"/></filter><filter id="br4" x="-50%" y="-50%" width="200%" height="200%"><feGaussianBlur stdDeviation="3"/></filter><linearGradient id="gr4" x1="0" y1="0" x2="0" y2="1"><stop offset="0" stop-color="#8e8a4a"/><stop offset="0.5" stop-color="#a89a4c"/><stop offset="1" stop-color="#8a8444"/></linearGradient></defs>
<g clip-path="url(#cr4)"><rect width="78" height="78" fill="url(#gr4)"/>
<g filter="url(#br4)"><ellipse cx="40" cy="2" rx="9" ry="6" fill="#f2ecd0"/><rect x="52" y="4" width="22" height="18" fill="#d8bc52"/><rect x="64" y="18" width="10" height="14" fill="#4e4c36"/>
<rect x="0" y="24" width="20" height="6" fill="#5e5a44"/><rect x="0" y="32" width="20" height="5" fill="#e0c66e"/><rect x="0" y="37" width="20" height="4" fill="#7c8a46"/><rect x="0" y="42" width="20" height="6" fill="#e6cc74"/>
<rect x="62" y="34" width="16" height="12" fill="#e2c86e"/><rect x="0" y="52" width="16" height="20" fill="#7e7a3c"/></g>
<g filter="url(#fr4)">
<path d="M39 4 C28 4 21 10 19 20 C17 32 15 42 12 52 C10 60 12 70 24 78 L56 78 C66 70 69 60 67 50 C65 40 65 28 61 18 C58 9 50 4 39 4Z" fill="#3b2820"/>
<path d="M27 24 C28 17 33 15.5 40 15.5 C48 15.5 53 18 54 24 L56.5 33 C56 44 50 53 39 54 C30 53 25 44 25 34Z" fill="#dcae98"/>
<path d="M27 24 C26 19 31 12 40 12 L40 16 C33 16 29 19 27 26Z" fill="#3b2820"/>
<path d="M29 28 L35 27.5 M43 27.5 L49 28" stroke="#5a3a2e" stroke-width="1.4"/>
<path d="M30 30.5 L34 30.5 M44 30.5 L48 30.5" stroke="#4a4a50" stroke-width="1.5"/>
<path d="M32 45 C36 47.5 41 47.5 44 45" stroke="#b0706a" stroke-width="2"/>
<rect x="32" y="50" width="12" height="16" fill="#d3a08c"/>
<path d="M29.5 78 L30 65.5 C34 64 40 64 43.5 65.5 L44 78Z" fill="#e6e6ea"/>
<path d="M56 59 L70 64 L70 78 L54 78Z" fill="#c6c4bc"/>
</g></g></svg>
<div class="t" style="left:2691.8px;top:1647.9px;font-size:36px;font-weight:400;color:#111827;letter-spacing:0.22px;-webkit-text-stroke:0.45px currentColor;">Olivia Martin</div>
<div class="t" style="left:3059.9px;top:1647.9px;font-size:36px;font-weight:400;color:#6b7280;letter-spacing:-1.5px;">v1</div>
<div class="a" style="left:3409.3px;top:1643.3px;width:7.8px;height:7.8px;border-radius:50%;background:#111827"></div>
<div class="a" style="left:3409.3px;top:1654.3px;width:7.8px;height:7.8px;border-radius:50%;background:#111827"></div>
<div class="a" style="left:3409.3px;top:1665.3px;width:7.8px;height:7.8px;border-radius:50%;background:#111827"></div>
<div class="a" style="left:853px;top:1885px;width:2643px;height:2px;background:#e5e7eb;"></div>
<div class="t" style="left:890.5px;top:1795.2px;font-size:36px;font-weight:400;color:#111827;letter-spacing:-0.73px;-webkit-text-stroke:0.45px currentColor;">GreenScape Gardens</div>
<div class="t" style="left:1366.9px;top:1795.2px;font-size:36px;font-weight:400;color:#6b7280;">August 2025</div>
<div class="a" style="left:1760px;top:1783.9px;width:231px;height:58px;background:#dcfce7;border-radius:14px"></div>
<svg class="a" style="left:1783px;top:1798.4px" width="29" height="29" viewBox="0 0 29 29"><circle cx="14.5" cy="14.5" r="14.5" fill="#166534"/><path d="M8.5 15.2l4.2 4.2 7.6-10" stroke="#dcfce7" stroke-width="3" stroke-linecap="round" stroke-linejoin="round" fill="none"/></svg>
<div class="t" style="left:1830.0px;top:1797.1px;font-size:30px;font-weight:400;color:#166534;-webkit-text-stroke:0.45px currentColor;">Generated</div>
<div class="t" style="left:2128.0px;top:1795.2px;font-size:36px;font-weight:400;color:#6b7280;letter-spacing:-0.62px;">29 Aug 2025, 17:45</div>
<svg class="a" style="left:2586.0px;top:1773.4px" width="78" height="78" viewBox="0 0 78 78"><defs><clipPath id="cr5"><circle cx="39" cy="39" r="39"/></clipPath><filter id="fr5" x="-20%" y="-20%" width="140%" height="140%"><feGaussianBlur stdDeviation="0.8"/></filter><filter id="br5" x="-50%" y="-50%" width="200%" height="200%"><feGaussianBlur stdDeviation="3"/></filter><linearGradient id="gr5" x1="0" y1="0" x2="1" y2="0"><stop offset="0" stop-color="#8a7c34"/><stop offset="0.5" stop-color="#b09840"/><stop offset="1" stop-color="#a89040"/></linearGradient></defs>
<g clip-path="url(#cr5)"><rect width="78" height="78" fill="url(#gr5)"/>
<g filter="url(#br5)"><ellipse cx="24" cy="6" rx="8" ry="6" fill="#efe6c0"/><ellipse cx="62" cy="8" rx="6" ry="6" fill="#efe6c0"/><rect x="8" y="14" width="14" height="14" fill="#5c5a30"/>
<ellipse cx="12" cy="46" rx="9" ry="14" fill="#d4b446"/><ellipse cx="70" cy="44" rx="8" ry="14" fill="#dcc058"/></g>
<g filter="url(#fr5)">
<path d="M63 12 L66 70" stroke="#4a3a2a" stroke-width="3.5"/>
<path d="M22 30 C22 20 30 14.5 40.5 14.5 C51 14.5 59 20 59 30 L59 48 C59 60 51 68 40.5 68 C30 68 22 60 22 48Z" fill="#d6a48c"/>
<ellipse cx="21.5" cy="40" rx="3" ry="6" fill="#c99680"/><ellipse cx="60" cy="40" rx="3" ry="6" fill="#c99680"/>
<path d="M19.5 37 C17 18 26 3 40 3 C55 3 64 16 62 36 C60 28 58 22 53 19 C45 16 34 16 27 20 C23 24 21 30 19.5 37Z" fill="#1c1a1c"/>
<path d="M26 31.5 L35 31 M45 31 L54 31.5" stroke="#231c1c" stroke-width="2.4"/>
<path d="M29 35 L34 35 M46 35 L51 35" stroke="#4a3a34" stroke-width="1.5"/>
<path d="M24.5 45 C25 62 33 68.5 40.5 68.5 C48 68.5 56 62 56.5 45 C54 53 50 56.5 40.5 57 C31 56.5 27 53 24.5 45Z" fill="#5f4636" opacity="0.88"/><path d="M31 49 C35 46.5 46 46.5 50 49 C46 48.5 35 48.5 31 49Z" stroke="#4a3428" stroke-width="2.2"/>
<path d="M34 52.5 C37 54.5 44 54.5 47 52.5" stroke="#f0ece6" stroke-width="1.6"/>
<path d="M4 78 C8 68 16 64 28 63 C32 70 48 70 53 63 C64 64 72 68 76 78Z" fill="#3e4654"/>
</g></g></svg>
<div class="t" style="left:2690.5px;top:1795.2px;font-size:36px;font-weight:400;color:#111827;letter-spacing:-0.72px;-webkit-text-stroke:0.45px currentColor;">Liam Hughes</div>
<div class="t" style="left:3059.9px;top:1795.2px;font-size:36px;font-weight:400;color:#6b7280;letter-spacing:-1.5px;">v1</div>
<div class="a" style="left:3409.3px;top:1790.5px;width:7.8px;height:7.8px;border-radius:50%;background:#111827"></div>
<div class="a" style="left:3409.3px;top:1801.5px;width:7.8px;height:7.8px;border-radius:50%;background:#111827"></div>
<div class="a" style="left:3409.3px;top:1812.5px;width:7.8px;height:7.8px;border-radius:50%;background:#111827"></div>
<div class="a" style="left:853px;top:2033px;width:2643px;height:2px;background:#e5e7eb;"></div>
<div class="t" style="left:889.0px;top:1942.5px;font-size:36px;font-weight:400;color:#111827;letter-spacing:-0.5px;-webkit-text-stroke:0.45px currentColor;">Innovate UK</div>
<div class="t" style="left:1366.9px;top:1942.5px;font-size:36px;font-weight:400;color:#6b7280;">August 2025</div>
<div class="a" style="left:1760px;top:1931.2px;width:231px;height:58px;background:#dcfce7;border-radius:14px"></div>
<svg class="a" style="left:1783px;top:1945.7px" width="29" height="29" viewBox="0 0 29 29"><circle cx="14.5" cy="14.5" r="14.5" fill="#166534"/><path d="M8.5 15.2l4.2 4.2 7.6-10" stroke="#dcfce7" stroke-width="3" stroke-linecap="round" stroke-linejoin="round" fill="none"/></svg>
<div class="t" style="left:1830.0px;top:1944.4px;font-size:30px;font-weight:400;color:#166534;-webkit-text-stroke:0.45px currentColor;">Generated</div>
<div class="t" style="left:2128.4px;top:1942.5px;font-size:36px;font-weight:400;color:#6b7280;letter-spacing:-1.66px;">31 Aug 2025, 11:15</div>
<svg class="a" style="left:2586.0px;top:1920.7px" width="78" height="78" viewBox="0 0 78 78"><defs><clipPath id="cr6"><circle cx="39" cy="39" r="39"/></clipPath><filter id="fr6" x="-20%" y="-20%" width="140%" height="140%"><feGaussianBlur stdDeviation="0.8"/></filter><filter id="br6" x="-50%" y="-50%" width="200%" height="200%"><feGaussianBlur stdDeviation="3"/></filter><linearGradient id="gr6" x1="0" y1="0" x2="1" y2="1"><stop offset="0" stop-color="#5e5a30"/><stop offset="0.5" stop-color="#968240"/><stop offset="1" stop-color="#c4a452"/></linearGradient></defs>
<g clip-path="url(#cr6)"><rect width="78" height="78" fill="url(#gr6)"/>
<g filter="url(#br6)"><rect x="2" y="8" width="16" height="50" fill="#4a4628"/><ellipse cx="24" cy="24" rx="4" ry="4" fill="#ece2b8"/><ellipse cx="64" cy="22" rx="8" ry="8" fill="#dcc88e"/>
<rect x="54" y="50" width="24" height="12" fill="#e8ca6a"/><rect x="6" y="56" width="12" height="10" fill="#c8a852"/></g>
<g filter="url(#fr6)">
<path d="M21 30 C21 19 29 13 40 13 C52 13 59 19 59 31 L58.5 45 C57 55 50 61.5 41 61.5 C32 61 24 54 22.5 44Z" fill="#d8a78f"/>
<ellipse cx="21.5" cy="40" rx="3" ry="6" fill="#cc9a84"/>
<path d="M21 36 C18 18 28 2.5 40 2.5 C54 2.5 63 12 60 34 C58 24 54 18.5 46 17.5 C37 16.5 28 18 24 26 C22.5 29 22 32 21 36Z" fill="#6f6659"/>
<path d="M32 30 L39 29.5 M47 29.5 L54 30" stroke="#6a5046" stroke-width="1.6"/>
<path d="M34 33 L38 33 M48 33 L52 33" stroke="#5a6478" stroke-width="1.5"/>
<path d="M36 48.5 C40 50 46 50 50 48.5" stroke="#a87060" stroke-width="1.6"/>
<path d="M24 54.5 L36.5 78 L53 78 L56 61.5 C50 62 44 64 40 64 C32 62 28 58 24 54.5Z" fill="#b8cde2"/>
<path d="M0 78 L0 72 C6 68 12 66.4 23.4 55.7 L36.5 78Z M55 59.8 L62 64 C68 68 74 72 78 78 L53 78Z" fill="#1f2a44"/>
</g></g></svg>
<div class="t" style="left:2690.5px;top:1942.5px;font-size:36px;font-weight:400;color:#111827;letter-spacing:-0.45px;-webkit-text-stroke:0.45px currentColor;">Noah King</div>
<div class="t" style="left:3059.9px;top:1942.5px;font-size:36px;font-weight:400;color:#6b7280;letter-spacing:-1.5px;">v1</div>
<div class="a" style="left:3409.3px;top:1937.8px;width:7.8px;height:7.8px;border-radius:50%;background:#111827"></div>
<div class="a" style="left:3409.3px;top:1948.8px;width:7.8px;height:7.8px;border-radius:50%;background:#111827"></div>
<div class="a" style="left:3409.3px;top:1959.8px;width:7.8px;height:7.8px;border-radius:50%;background:#111827"></div>
<div class="a" style="left:853px;top:2180px;width:2643px;height:2px;background:#e5e7eb;"></div>
<div class="t" style="left:889.3px;top:2089.7px;font-size:36px;font-weight:400;color:#111827;letter-spacing:0.16px;-webkit-text-stroke:0.45px currentColor;">Prestige Motors</div>
<div class="t" style="left:1366.9px;top:2089.7px;font-size:36px;font-weight:400;color:#6b7280;">August 2025</div>
<div class="a" style="left:1760px;top:2078.5px;width:231px;height:58px;background:#dcfce7;border-radius:14px"></div>
<svg class="a" style="left:1783px;top:2093.0px" width="29" height="29" viewBox="0 0 29 29"><circle cx="14.5" cy="14.5" r="14.5" fill="#166534"/><path d="M8.5 15.2l4.2 4.2 7.6-10" stroke="#dcfce7" stroke-width="3" stroke-linecap="round" stroke-linejoin="round" fill="none"/></svg>
<div class="t" style="left:1830.0px;top:2091.7px;font-size:30px;font-weight:400;color:#166534;-webkit-text-stroke:0.45px currentColor;">Generated</div>
<div class="t" style="left:2128.0px;top:2089.7px;font-size:36px;font-weight:400;color:#6b7280;letter-spacing:-0.16px;">29 Aug 2025, 19:00</div>
<svg class="a" style="left:2586.0px;top:2068.0px" width="78" height="78" viewBox="0 0 78 78"><defs><clipPath id="cr7"><circle cx="39" cy="39" r="39"/></clipPath><filter id="fr7" x="-20%" y="-20%" width="140%" height="140%"><feGaussianBlur stdDeviation="0.8"/></filter><filter id="br7" x="-50%" y="-50%" width="200%" height="200%"><feGaussianBlur stdDeviation="3"/></filter><linearGradient id="gr7" x1="0" y1="0" x2="1" y2="1"><stop offset="0" stop-color="#e4c070"/><stop offset="0.5" stop-color="#d8a444"/><stop offset="1" stop-color="#deae52"/></linearGradient></defs>
<g clip-path="url(#cr7)"><rect width="78" height="78" fill="url(#gr7)"/>
<g filter="url(#br7)"><ellipse cx="36" cy="4" rx="18" ry="7" fill="#f6f0de"/><rect x="2" y="22" width="18" height="24" fill="#c88a44"/><rect x="0" y="46" width="22" height="8" fill="#f2ca72"/>
<rect x="64" y="20" width="6" height="40" fill="#a87040"/></g>
<g filter="url(#fr7)">
<path d="M21 78 L19.5 50 C19 36 19 24 24 16 C29 9 36 6.5 42 6.5 C52 7 60 12 64 24 C67 36 67 52 69 64 C68 72 64 76 60 78Z" fill="#141416"/>
<path d="M22 30 C22 28 28 27.5 36 28 C44 28.5 50 28.5 52 30 L53.5 42 C53 52 46 58.5 36 58.5 C28 58 22 50 21.5 40Z" fill="#d49a78"/>
<path d="M50 28 L56 30 L57 56 L51 50Z" fill="#141416"/>
<path d="M23 33 L29 32.5 M37 32.5 L45 33" stroke="#2a1a14" stroke-width="1.8"/>
<path d="M27 40 C29 42 30 42 30 44" stroke="#b87a5e" stroke-width="1.2"/>
<path d="M28 48 C31 49 36 49 39 47.5" stroke="#a86a58" stroke-width="1.8"/>
<path d="M16 78 C20 64 28 57 38 56 L50 54 C58 58 64 66 66 78Z" fill="#111114"/>
</g></g></svg>
<div class="t" style="left:2691.9px;top:2089.7px;font-size:36px;font-weight:400;color:#111827;letter-spacing:-0.37px;-webkit-text-stroke:0.45px currentColor;">Sophia Walker</div>
<div class="t" style="left:3059.9px;top:2089.7px;font-size:36px;font-weight:400;color:#6b7280;">v3</div>
<div class="a" style="left:3409.3px;top:2085.1px;width:7.8px;height:7.8px;border-radius:50%;background:#111827"></div>
<div class="a" style="left:3409.3px;top:2096.1px;width:7.8px;height:7.8px;border-radius:50%;background:#111827"></div>
<div class="a" style="left:3409.3px;top:2107.1px;width:7.8px;height:7.8px;border-radius:50%;background:#111827"></div>
<div class="t" style="left:890.6px;top:2237.0px;font-size:36px;font-weight:400;color:#111827;letter-spacing:-0.43px;-webkit-text-stroke:0.45px currentColor;">QuantumLeap Corp</div>
<div class="t" style="left:1366.9px;top:2237.0px;font-size:36px;font-weight:400;color:#6b7280;">August 2025</div>
<div class="a" style="left:1760px;top:2225.8px;width:231px;height:58px;background:#dcfce7;border-radius:14px"></div>
<svg class="a" style="left:1783px;top:2240.3px" width="29" height="29" viewBox="0 0 29 29"><circle cx="14.5" cy="14.5" r="14.5" fill="#166534"/><path d="M8.5 15.2l4.2 4.2 7.6-10" stroke="#dcfce7" stroke-width="3" stroke-linecap="round" stroke-linejoin="round" fill="none"/></svg>
<div class="t" style="left:1830.0px;top:2239.0px;font-size:30px;font-weight:400;color:#166534;-webkit-text-stroke:0.45px currentColor;">Generated</div>
<div class="t" style="left:2128.4px;top:2237.0px;font-size:36px;font-weight:400;color:#6b7280;letter-spacing:-0.12px;">30 Aug 2025, 13:00</div>
<svg class="a" style="left:2586.0px;top:2215.3px" width="78" height="78" viewBox="0 0 78 78"><defs><clipPath id="cr8"><circle cx="39" cy="39" r="39"/></clipPath><filter id="fr8" x="-20%" y="-20%" width="140%" height="140%"><feGaussianBlur stdDeviation="0.8"/></filter><filter id="br8" x="-50%" y="-50%" width="200%" height="200%"><feGaussianBlur stdDeviation="3"/></filter><linearGradient id="gr8" x1="0" y1="0" x2="1" y2="1"><stop offset="0" stop-color="#5e5a30"/><stop offset="0.5" stop-color="#968240"/><stop offset="1" stop-color="#c4a452"/></linearGradient></defs>
<g clip-path="url(#cr8)"><rect width="78" height="78" fill="url(#gr8)"/>
<g filter="url(#br8)"><rect x="2" y="8" width="16" height="50" fill="#4a4628"/><ellipse cx="24" cy="24" rx="4" ry="4" fill="#ece2b8"/><ellipse cx="64" cy="22" rx="8" ry="8" fill="#dcc88e"/>
<rect x="54" y="50" width="24" height="12" fill="#e8ca6a"/><rect x="6" y="56" width="12" height="10" fill="#c8a852"/></g>
<g filter="url(#fr8)">
<path d="M21 30 C21 19 29 13 40 13 C52 13 59 19 59 31 L58.5 45 C57 55 50 61.5 41 61.5 C32 61 24 54 22.5 44Z" fill="#d8a78f"/>
<ellipse cx="21.5" cy="40" rx="3" ry="6" fill="#cc9a84"/>
<path d="M21 36 C18 18 28 2.5 40 2.5 C54 2.5 63 12 60 34 C58 24 54 18.5 46 17.5 C37 16.5 28 18 24 26 C22.5 29 22 32 21 36Z" fill="#6f6659"/>
<path d="M32 30 L39 29.5 M47 29.5 L54 30" stroke="#6a5046" stroke-width="1.6"/>
<path d="M34 33 L38 33 M48 33 L52 33" stroke="#5a6478" stroke-width="1.5"/>
<path d="M36 48.5 C40 50 46 50 50 48.5" stroke="#a87060" stroke-width="1.6"/>
<path d="M24 54.5 L36.5 78 L53 78 L56 61.5 C50 62 44 64 40 64 C32 62 28 58 24 54.5Z" fill="#b8cde2"/>
<path d="M0 78 L0 72 C6 68 12 66.4 23.4 55.7 L36.5 78Z M55 59.8 L62 64 C68 68 74 72 78 78 L53 78Z" fill="#1f2a44"/>
</g></g></svg>
<div class="t" style="left:2690.5px;top:2237.0px;font-size:36px;font-weight:400;color:#111827;letter-spacing:-0.45px;-webkit-text-stroke:0.45px currentColor;">Noah King</div>
<div class="t" style="left:3059.9px;top:2237.0px;font-size:36px;font-weight:400;color:#6b7280;letter-spacing:-1.5px;">v1</div>
<div class="a" style="left:3409.3px;top:2232.4px;width:7.8px;height:7.8px;border-radius:50%;background:#111827"></div>
<div class="a" style="left:3409.3px;top:2243.4px;width:7.8px;height:7.8px;border-radius:50%;background:#111827"></div>
<div class="a" style="left:3409.3px;top:2254.4px;width:7.8px;height:7.8px;border-radius:50%;background:#111827"></div>
</body></html>
